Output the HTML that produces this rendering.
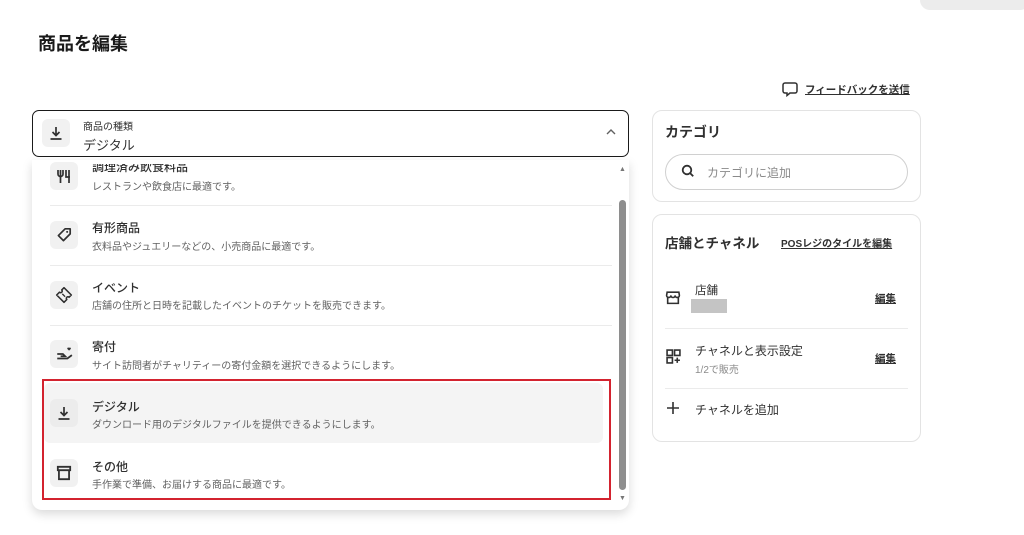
<!DOCTYPE html>
<html><head><meta charset="utf-8"><style>
*{box-sizing:border-box;margin:0;padding:0}
body{width:1024px;height:535px;background:#fff;font-family:"Liberation Sans","Noto Sans CJK JP",sans-serif;color:#303030;position:relative;overflow:hidden}
.a{position:absolute}
.ib{position:absolute;width:28px;height:28px;border-radius:6px;background:#f1f1f1;display:flex;align-items:center;justify-content:center}
.t{position:absolute;font-size:12px;color:#303030;font-weight:500}
.d{position:absolute;font-size:10px;color:#616161}
.hr{position:absolute;left:50px;width:562px;height:1px;background:#ebebeb}
.card{position:absolute;border:1px solid #e3e3e3;border-radius:10px;background:#fff}
.u{text-decoration:underline;font-weight:700;font-size:10.5px;color:#303030}
</style></head><body>
<div class="a" style="left:920px;top:-12px;width:110px;height:22px;border-radius:10px;background:#ececec"></div>
<div class="a" style="left:38px;top:30px;font-size:18px;font-weight:700;color:#1a1a1a">商品を編集</div>
<svg class="a" style="left:781px;top:81px" width="18" height="16" viewBox="0 0 18 16"><path d="M4 2h10a2 2 0 0 1 2 2v6a2 2 0 0 1-2 2H9l-3 2.5V12H4a2 2 0 0 1-2-2V4a2 2 0 0 1 2-2z" fill="none" stroke="#303030" stroke-width="1.5"/></svg>
<div class="a u" style="left:805px;top:82px">フィードバックを送信</div>

<div class="a" style="left:32px;top:110px;width:597px;height:47px;border:1.5px solid #1a1a1a;border-radius:7px;background:#fff"></div>
<div class="ib" style="left:42px;top:119px"><svg width="18" height="18" viewBox="0 0 18 18"><path d="M9 3v8.5M5.5 8l3.5 3.5L12.5 8M3.5 15h11" fill="none" stroke="#303030" stroke-width="1.7"/></svg></div>
<div class="a" style="left:83px;top:118px;font-size:10px;color:#303030">商品の種類</div>
<div class="a" style="left:83px;top:135px;font-size:13px;color:#303030">デジタル</div>
<svg class="a" style="left:605px;top:128px" width="12" height="8" viewBox="0 0 12 8"><path d="M2 6l4-4 4 4" fill="none" stroke="#616161" stroke-width="1.4"/></svg>

<div class="a" style="left:32px;top:160px;width:597px;height:350px;background:#fff;border-radius:0 0 10px 10px;box-shadow:0 4px 10px rgba(0,0,0,.15)"></div>
<div class="ib" style="left:50px;top:162px"><svg width="18" height="18" viewBox="0 0 18 18"><path d="M3 3v4a2.5 2.5 0 0 0 5 0V3M5.5 3v13M11 3v7h4M14 3v13" fill="none" stroke="#303030" stroke-width="1.7"/></svg></div>
<div class="t" style="left:92px;top:158px;clip-path:inset(6px 0 0 0)">調理済み飲食料品</div>
<div class="d" style="left:92px;top:178px">レストランや飲食店に最適です。</div>
<div class="hr" style="top:205px"></div>
<div class="ib" style="left:50px;top:221px"><svg width="18" height="18" viewBox="0 0 16 16"><path d="M9 2.5h4.5V7L7.5 13 3 8.5z" fill="none" stroke="#303030" stroke-width="1.5" stroke-linejoin="round"/><circle cx="10.8" cy="5.2" r=".9" fill="#303030"/></svg></div>
<div class="t" style="left:92px;top:219px">有形商品</div>
<div class="d" style="left:92px;top:238px">衣料品やジュエリーなどの、小売商品に最適です。</div>
<div class="hr" style="top:265px"></div>
<div class="ib" style="left:50px;top:281px"><svg width="18" height="18" viewBox="0 0 16 16"><path d="M8 1.5l6.5 6.5-2 2a1.3 1.3 0 0 0-2 2l-2.5 2.5L1.5 8 4 5.5a1.3 1.3 0 0 0 2-2z" fill="none" stroke="#303030" stroke-width="1.4" stroke-linejoin="round"/><path d="M6.5 7l2.5 2.5" stroke="#303030" stroke-width="1.2"/></svg></div>
<div class="t" style="left:92px;top:279px">イベント</div>
<div class="d" style="left:92px;top:297px">店舗の住所と日時を記載したイベントのチケットを販売できます。</div>
<div class="hr" style="top:325px"></div>
<div class="ib" style="left:50px;top:340px"><svg width="18" height="18" viewBox="0 0 16 16"><path d="M2 8h5l2 2H5M2 12h9l4-3" fill="none" stroke="#303030" stroke-width="1.6"/><path d="M11 3.5l1.5 1.5 1.5-1.5a.8.8 0 0 0-1.5-.8.8.8 0 0 0-1.5.8z" fill="#303030"/></svg></div>
<div class="t" style="left:92px;top:338px">寄付</div>
<div class="d" style="left:92px;top:357px">サイト訪問者がチャリティーの寄付金額を選択できるようにします。</div>
<div class="a" style="left:44px;top:383px;width:559px;height:60px;background:#f4f4f4;border-radius:6px"></div>
<div class="ib" style="left:50px;top:399px;background:#ececec"><svg width="18" height="18" viewBox="0 0 18 18"><path d="M9 3v8.5M5.5 8l3.5 3.5L12.5 8M3.5 15h11" fill="none" stroke="#303030" stroke-width="1.7"/></svg></div>
<div class="t" style="left:92px;top:398px">デジタル</div>
<div class="d" style="left:92px;top:416px">ダウンロード用のデジタルファイルを提供できるようにします。</div>
<div class="ib" style="left:50px;top:459px"><svg width="18" height="18" viewBox="0 0 16 16"><path d="M2.5 2.5h11v3h-11zM3.5 5.5v8h9v-8" fill="none" stroke="#303030" stroke-width="1.6"/></svg></div>
<div class="t" style="left:92px;top:458px">その他</div>
<div class="d" style="left:92px;top:476px">手作業で準備、お届けする商品に最適です。</div>
<div class="a" style="left:42px;top:379px;width:569px;height:121px;border:2.5px solid #d3232f"></div>
<div class="a" style="left:619px;top:166px;font-size:7px;color:#777">▲</div>
<div class="a" style="left:619px;top:200px;width:7px;height:290px;border-radius:4px;background:#8e8e8e"></div>
<div class="a" style="left:619px;top:495px;font-size:7px;color:#777">▼</div>

<div class="card" style="left:652px;top:110px;width:269px;height:92px"></div>
<div class="a" style="left:665px;top:122px;font-size:14px;font-weight:700">カテゴリ</div>
<div class="a" style="left:665px;top:154px;width:243px;height:36px;border:1px solid #d0d0d0;border-radius:18px"></div>
<svg class="a" style="left:681px;top:164px" width="14" height="14" viewBox="0 0 14 14"><circle cx="6" cy="6" r="4.3" fill="none" stroke="#303030" stroke-width="1.8"/><path d="M9.2 9.2l3 3" stroke="#303030" stroke-width="1.8"/></svg>
<div class="a" style="left:707px;top:164px;font-size:12px;color:#8a8a8a">カテゴリに追加</div>

<div class="card" style="left:652px;top:214px;width:269px;height:228px"></div>
<div class="a" style="left:665px;top:232px;font-size:13.5px;font-weight:700">店舗とチャネル</div>
<div class="a u" style="left:781px;top:235px;font-size:10px">POSレジのタイルを編集</div>
<svg class="a" style="left:665px;top:290px" width="16" height="15" viewBox="0 0 15 14"><path d="M2 2h11l.5 3a2 2 0 0 1-4 0 2 2 0 0 1-4 0 2 2 0 0 1-4 0zM2.5 6v6.5h10V6" fill="none" stroke="#303030" stroke-width="1.5"/></svg>
<div class="a" style="left:695px;top:282px;font-size:11.5px">店舗</div>
<div class="a" style="left:691px;top:299px;width:36px;height:14px;background:#c4c4c4"></div>
<div class="a u" style="left:875px;top:291px">編集</div>
<div class="a" style="left:665px;top:328px;width:243px;height:1px;background:#ebebeb"></div>
<svg class="a" style="left:666px;top:349px" width="15" height="15" viewBox="0 0 14 14"><path d="M1 1h5v5H1zM8 1h5v5H8zM1 8h5v5H1zM10.5 8v5M8 10.5h5" fill="none" stroke="#303030" stroke-width="1.5"/></svg>
<div class="a" style="left:695px;top:342px;font-size:12px">チャネルと表示設定</div>
<div class="a" style="left:695px;top:361px;font-size:10px;color:#8a8a8a">1/2で販売</div>
<div class="a u" style="left:875px;top:351px">編集</div>
<div class="a" style="left:665px;top:388px;width:243px;height:1px;background:#ebebeb"></div>
<svg class="a" style="left:666px;top:401px" width="14" height="14" viewBox="0 0 14 14"><path d="M7 1v12M1 7h12" stroke="#303030" stroke-width="1.6"/></svg>
<div class="a" style="left:695px;top:401px;font-size:12px">チャネルを追加</div>
</body></html>
